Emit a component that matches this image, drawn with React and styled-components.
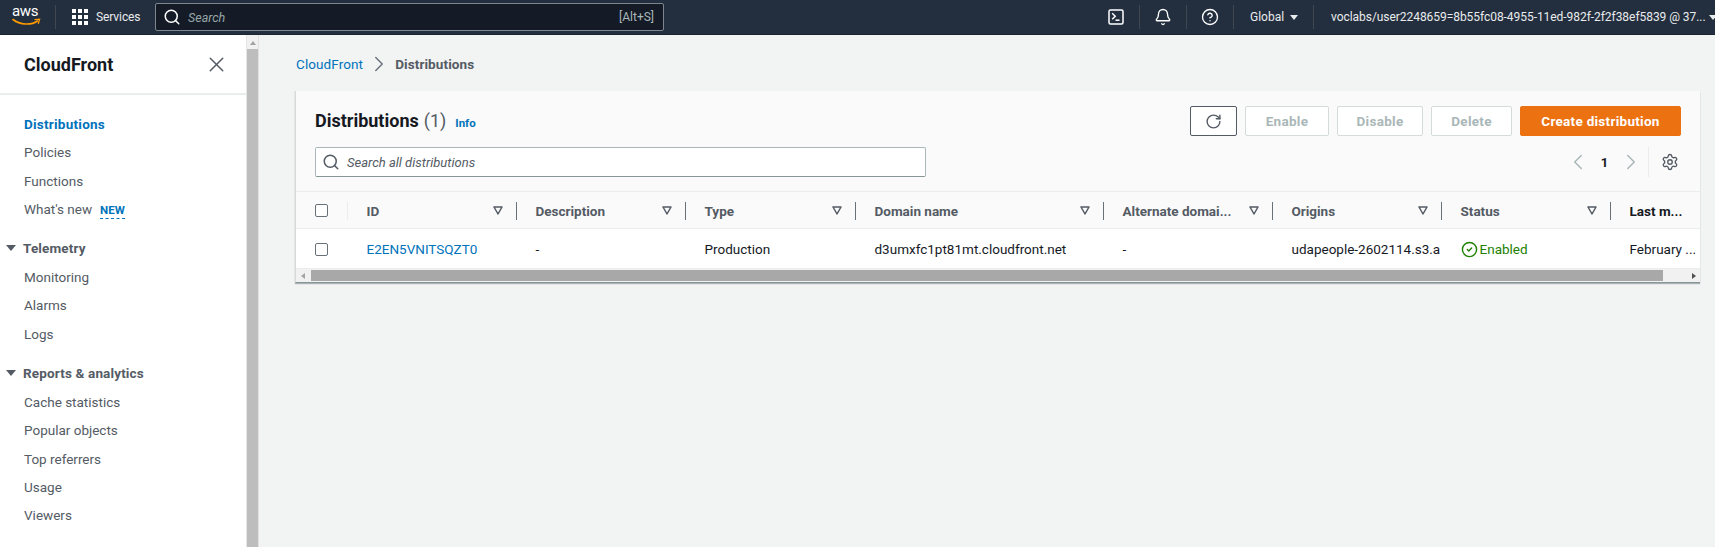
import React from "react";
import styled, { createGlobalStyle } from "styled-components";
import { Search, X, Bell, CircleHelp, RotateCw, Settings, ChevronLeft, ChevronRight, CircleCheck } from "lucide-react";

const GlobalStyle = createGlobalStyle`
  html, body { margin: 0; padding: 0; height: 100%; overflow: hidden; background: #f2f3f3; }
  * { box-sizing: border-box; }
  svg { flex: none; }
  body { font-family: Roboto, "Noto Sans", sans-serif; font-size: 13.5px; color: #16191f; }
`;

const Page = styled.div`
  display: flex;
  flex-direction: column;
  height: 547px;
  width: 1715px;
  overflow: hidden;
`;

const TopBar = styled.header`
  display: flex;
  align-items: center;
  height: 35px;
  flex: none;
  background: #232f3e;
  color: #e9ebed;
  border-bottom: 1px solid #1b2430;
`;

const LogoBox = styled.div`
  width: 56px;
  height: 24px;
  padding-left: 12px;
  flex: none;
  display: flex;
  flex-direction: column;
  border-right: 1px solid #414750;
  margin-right: 16px;
`;

const LogoText = styled.span`
  font-size: 15px;
  line-height: 13px;
  color: #fff;
  letter-spacing: -0.3px;
`;

const Services = styled.div`
  display: flex;
  align-items: center;
  flex: none;
  width: 59px;
  margin-left: 8px;
  font-size: 12px;
  letter-spacing: -0.1px;
`;

const TopSearch = styled.div`
  width: 509px;
  height: 28px;
  flex: none;
  background: #151b26;
  border: 1px solid #7d858e;
  border-radius: 2px;
  display: flex;
  align-items: center;
  padding: 0 9px 0 7px;
  gap: 7px;
  margin-right: 428px;
  font-size: 12.5px;
`;

const TopSearchHint = styled.span`
  font-style: italic;
  color: #95a5a6;
  flex: 1;
`;

const Shortcut = styled.span`
  color: #aab7b8;
  font-size: 12px;
`;

const TopIcon = styled.div`
  width: ${(p) => p.$w || 47}px;
  height: 24px;
  flex: none;
  display: flex;
  align-items: center;
  justify-content: center;
  border-right: 1px solid #414750;
`;

const Region = styled.div`
  display: flex;
  align-items: center;
  gap: 6px;
  height: 24px;
  flex: none;
  padding-left: 16px;
  width: 80px;
  font-size: 12px;
  border-right: 1px solid #414750;
`;

const UserName = styled.div`
  padding-left: 17px;
  flex: none;
  font-size: 12px;
  letter-spacing: -0.05px;
  white-space: nowrap;
  display: flex;
  align-items: center;
  gap: 3px;
`;

const Caret = styled.span`
  width: 0;
  height: 0;
  border-left: ${(p) => p.$size || 4}px solid transparent;
  border-right: ${(p) => p.$size || 4}px solid transparent;
  border-top: ${(p) => (p.$size || 4) + 1}px solid ${(p) => p.$color || "#e9ebed"};
  flex: none;
`;

const Body = styled.div`
  flex: 1;
  display: flex;
  min-height: 0;
`;

const SideNav = styled.nav`
  width: 246px;
  flex: none;
  background: #fff;
  color: #545b64;
`;

const NavHead = styled.div`
  height: 60px;
  display: flex;
  align-items: center;
  justify-content: space-between;
  padding: 0 17px 0 24px;
  border-bottom: 2px solid #eaeded;
  color: #16191f;
  font-size: 18px;
  font-weight: 700;
`;

const NavList = styled.div`
  padding-top: 15px;
  display: flex;
  flex-direction: column;
`;

const NavItem = styled.a`
  height: 28.3px;
  line-height: 28.3px;
  padding-left: 24px;
  font-size: 13.5px;
  color: ${(p) => (p.$active ? "#0073bb" : "#545b64")};
  font-weight: ${(p) => (p.$active ? 700 : 400)};
  letter-spacing: ${(p) => (p.$active ? "0.25px" : "0")};
`;

const NewBadge = styled.span`
  margin-left: 8px;
  font-size: 11.5px;
  font-weight: 700;
  color: #0073bb;
  border-bottom: 1px dashed #0073bb;
  padding-bottom: 1px;
`;

const NavGroup = styled.div`
  height: 30px;
  margin-top: 10px;
  display: flex;
  align-items: center;
  gap: 7px;
  padding-left: 6px;
  font-weight: 700;
  font-size: 13.5px;
  letter-spacing: 0.15px;
  color: #545b64;
`;

const ScrollTrack = styled.div`
  width: 13px;
  flex: none;
  background: #f1f1f1;
  border-left: 1px solid #e6e6e6;
  border-right: 1px solid #e0e0e0;
  display: flex;
  flex-direction: column;
  align-items: center;
  padding-top: 6px;
`;

const ScrollUp = styled.span`
  width: 0;
  height: 0;
  border-left: 3px solid transparent;
  border-right: 3px solid transparent;
  border-bottom: 4px solid #a3a3a3;
`;

const ScrollThumb = styled.div`
  width: 11px;
  flex: 1;
  background: #bdbdbd;
  margin-top: 4px;
`;

const Main = styled.main`
  flex: 1;
  padding: 0 15px 0 36px;
  min-width: 0;
`;

const Crumbs = styled.div`
  height: 56px;
  padding: 2px 0 0 1px;
  display: flex;
  align-items: center;
  gap: 3px;
  font-size: 13.5px;
  letter-spacing: 0.1px;
  color: #545b64;
  font-weight: 700;
`;

const CrumbLink = styled.a`
  color: #0073bb;
  font-weight: 400;
`;

const Card = styled.section`
  background: #fff;
  width: 1405px;
  border-left: 1px solid #d5dbdb;
  border-bottom: 1px solid #879596;
  box-shadow: 0 1px 1px 0 rgba(0, 28, 36, 0.3);
`;

const CardTop = styled.div`
  background: #fafafa;
  height: 101px;
  padding: 15px 19px 0 19px;
  border-bottom: 1px solid #eaeded;
`;

const TitleRow = styled.div`
  display: flex;
  align-items: center;
  justify-content: space-between;
  height: 30px;
`;

const Title = styled.h1`
  margin: -2px 0 0;
  font-size: 18px;
  font-weight: 700;
  display: flex;
  align-items: baseline;
`;

const Count = styled.span`
  font-weight: 400;
  color: #545b64;
  margin-left: 5px;
`;

const InfoLink = styled.a`
  font-size: 11.5px;
  font-weight: 700;
  color: #0073bb;
  margin-left: 9px;
`;

const Actions = styled.div`
  display: flex;
  gap: 8px;
`;

const Button = styled.button`
  height: 30px;
  width: ${(p) => p.$w}px;
  font-family: inherit;
  font-size: 13.5px;
  font-weight: 700;
  letter-spacing: 0.28px;
  border-radius: 2px;
  padding: 0;
  display: flex;
  align-items: center;
  justify-content: center;
  background: ${(p) => (p.$primary ? "#ec7211" : "#fff")};
  color: ${(p) => (p.$primary ? "#fff" : "#aab7b8")};
  border: 1px solid ${(p) => (p.$primary ? "#ec7211" : p.$dark ? "#545b64" : "#d5dbdb")};
`;

const FilterRow = styled.div`
  display: flex;
  align-items: center;
  justify-content: space-between;
  margin-top: 11px;
  height: 30px;
`;

const SearchBox = styled.div`
  width: 611px;
  height: 30px;
  background: #fff;
  border: 1px solid #aab7b8;
  border-bottom-color: #879596;
  border-radius: 2px;
  display: flex;
  align-items: center;
  gap: 7px;
  padding: 0 6px;
  font-style: italic;
  color: #545b64;
  font-size: 13px;
`;

const Pager = styled.div`
  display: flex;
  align-items: center;
  height: 30px;
  color: #16191f;
  font-weight: 700;
  font-size: 13px;
`;

const PagerNum = styled.span`
  width: 27px;
  text-align: center;
`;

const SettingsCell = styled.div`
  margin-left: 4px;
  padding-left: 12px;
  width: 33px;
  height: 30px;
  border-left: 1px solid #eaeded;
  display: flex;
  align-items: center;
  color: #545b64;
`;

const columns = "51px 169px 169px 170px 248px 169px 169px 169px 90px";

const HeadRow = styled.div`
  display: grid;
  grid-template-columns: ${columns};
  height: 37px;
  padding-top: 1px;
  background: #fafafa;
  border-bottom: 1px solid #eaeded;
  align-items: center;
`;

const BodyRow = styled.div`
  display: grid;
  grid-template-columns: ${columns};
  height: 39px;
  padding-top: 1px;
  background: #fff;
  align-items: center;
`;

const CheckCell = styled.div`
  padding-left: 19px;
  height: 18px;
  display: flex;
  align-items: center;
`;

const CheckBox = styled.span`
  width: 13px;
  height: 13px;
  background: #fff;
  border: 1px solid #687078;
  border-radius: 2px;
  display: block;
`;

const HeadCell = styled.div`
  height: 18px;
  display: flex;
  align-items: center;
  justify-content: space-between;
  padding: 0 13px 0 18.5px;
  border-left: ${(p) => (p.$first ? "1px solid #eaeded" : "1px solid #687078")};
  font-weight: 700;
  font-size: 13.5px;
  color: ${(p) => (p.$dark ? "#16191f" : "#545b64")};
  white-space: nowrap;
  overflow: hidden;
`;

const Cell = styled.div`
  padding-left: 19.5px;
  white-space: nowrap;
  overflow: hidden;
  font-size: 13.5px;
  color: #16191f;
  display: flex;
  align-items: center;
`;

const IdLink = styled.a`
  color: #0073bb;
`;

const Enabled = styled.span`
  color: #1d8102;
  display: flex;
  align-items: center;
  gap: 2px;
`;

const HScroll = styled.div`
  height: 14px;
  background: #f1f1f1;
  display: flex;
  align-items: center;
  padding-left: 5px;
  border-top: 1px solid #eaeded;
`;

const HThumb = styled.div`
  height: 11px;
  width: 1352px;
  margin-left: 6px;
  background: #a8a8a8;
`;

const Arrow = styled.span`
  width: 0;
  height: 0;
  border-top: 3px solid transparent;
  border-bottom: 3px solid transparent;
  ${(p) => (p.$left ? "border-right: 4px solid #a3a3a3;" : "border-left: 4px solid #505050; margin-left: 29px;")}
`;

const AwsLogo = () => (
  <LogoBox>
    <LogoText>aws</LogoText>
    <svg width="29" height="9" viewBox="0 0 29 9" fill="none">
      <path d="M1 1.5 C8 7 19 7.5 25.5 3" stroke="#ff9900" strokeWidth="1.6" strokeLinecap="round" />
      <path d="M23 1.6 L27.6 1.2 L26.4 5.4" stroke="#ff9900" strokeWidth="1.3" strokeLinecap="round" />
    </svg>
  </LogoBox>
);

const GridIcon = () => (
  <svg width="16" height="16" viewBox="0 0 16 16" fill="#fff">
    {[0, 6, 12].flatMap((y) =>
      [0, 6, 12].map((x) => <rect key={`${x}-${y}`} x={x} y={y} width="4" height="4" />)
    )}
  </svg>
);

const TerminalIcon = () => (
  <svg width="16" height="16" viewBox="0 0 16 16" fill="none">
    <rect x="1" y="1" width="14" height="14" rx="1.5" stroke="#fff" strokeWidth="1.5" fill="#232f3e" />
    <path d="M4.2 4.2 L7.2 7.2 L4.2 10.2" stroke="#fff" strokeWidth="1.5" />
    <path d="M7.5 11.2 H11.5" stroke="#fff" strokeWidth="1.5" />
  </svg>
);

const FilterIcon = () => (
  <svg width="10" height="9" viewBox="0 0 10 9" fill="none">
    <path d="M1 1 H9 L5 8 Z" stroke="#545b64" strokeWidth="1.5" strokeLinejoin="round" />
  </svg>
);

const headers = ["ID", "Description", "Type", "Domain name", "Alternate domai...", "Origins", "Status"];
const navTop = ["Policies", "Functions"];
const telemetry = ["Monitoring", "Alarms", "Logs"];
const reports = ["Cache statistics", "Popular objects", "Top referrers", "Usage", "Viewers"];

export default function App() {
  return (
    <Page>
      <GlobalStyle />
      <TopBar>
        <AwsLogo />
        <GridIcon />
        <Services>Services</Services>
        <TopSearch>
          <Search size={18} color="#fff" strokeWidth={2} />
          <TopSearchHint>Search</TopSearchHint>
          <Shortcut>[Alt+S]</Shortcut>
        </TopSearch>
        <TopIcon $w={48}><TerminalIcon /></TopIcon>
        <TopIcon><Bell size={18} color="#fff" strokeWidth={1.8} /></TopIcon>
        <TopIcon><CircleHelp size={18} color="#fff" strokeWidth={1.8} /></TopIcon>
        <Region>Global <Caret /></Region>
        <UserName>voclabs/user2248659=8b55fc08-4955-11ed-982f-2f2f38ef5839 @ 37... <Caret /></UserName>
      </TopBar>
      <Body>
        <SideNav>
          <NavHead>
            CloudFront
            <X size={25} color="#545b64" strokeWidth={1.4} />
          </NavHead>
          <NavList>
            <NavItem $active>Distributions</NavItem>
            {navTop.map((t) => <NavItem key={t}>{t}</NavItem>)}
            <NavItem>What's new<NewBadge>NEW</NewBadge></NavItem>
            <NavGroup><Caret $size={5.5} $color="#545b64" />Telemetry</NavGroup>
            {telemetry.map((t) => <NavItem key={t}>{t}</NavItem>)}
            <NavGroup><Caret $size={5.5} $color="#545b64" />Reports &amp; analytics</NavGroup>
            {reports.map((t) => <NavItem key={t}>{t}</NavItem>)}
          </NavList>
        </SideNav>
        <ScrollTrack>
          <ScrollUp />
          <ScrollThumb />
        </ScrollTrack>
        <Main>
          <Crumbs>
            <CrumbLink>CloudFront</CrumbLink>
            <ChevronRight size={26} color="#687078" strokeWidth={1.3} />
            Distributions
          </Crumbs>
          <Card>
            <CardTop>
              <TitleRow>
                <Title>
                  Distributions<Count>(1)</Count>
                  <InfoLink>Info</InfoLink>
                </Title>
                <Actions>
                  <Button $w={47} $dark><RotateCw size={17} color="#545b64" strokeWidth={2} /></Button>
                  <Button $w={84}>Enable</Button>
                  <Button $w={86}>Disable</Button>
                  <Button $w={81}>Delete</Button>
                  <Button $w={161} $primary>Create distribution</Button>
                </Actions>
              </TitleRow>
              <FilterRow>
                <SearchBox>
                  <Search size={18} color="#545b64" strokeWidth={2} />
                  Search all distributions
                </SearchBox>
                <Pager>
                  <ChevronLeft size={26} color="#aab7b8" strokeWidth={1.4} />
                  <PagerNum>1</PagerNum>
                  <ChevronRight size={26} color="#aab7b8" strokeWidth={1.4} />
                  <SettingsCell><Settings size={18} strokeWidth={1.8} /></SettingsCell>
                </Pager>
              </FilterRow>
            </CardTop>
            <HeadRow>
              <CheckCell><CheckBox /></CheckCell>
              {headers.map((h, i) => (
                <HeadCell key={h} $first={i === 0}>{h}<FilterIcon /></HeadCell>
              ))}
              <HeadCell $dark>Last m...</HeadCell>
            </HeadRow>
            <BodyRow>
              <CheckCell><CheckBox /></CheckCell>
              <Cell><IdLink>E2EN5VNITSQZT0</IdLink></Cell>
              <Cell>-</Cell>
              <Cell>Production</Cell>
              <Cell>d3umxfc1pt81mt.cloudfront.net</Cell>
              <Cell>-</Cell>
              <Cell>udapeople-2602114.s3.a</Cell>
              <Cell><Enabled><CircleCheck size={17} strokeWidth={2} />Enabled</Enabled></Cell>
              <Cell>February ...</Cell>
            </BodyRow>
            <HScroll>
              <Arrow $left />
              <HThumb />
              <Arrow />
            </HScroll>
          </Card>
        </Main>
      </Body>
    </Page>
  );
}
